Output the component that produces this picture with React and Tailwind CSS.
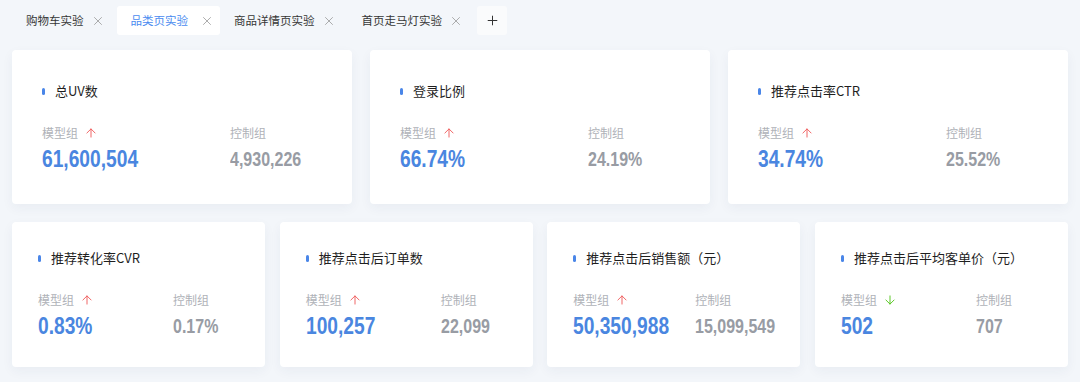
import React from 'react';
import { ArrowUp, ArrowDown, X, Plus } from 'lucide-react';

const tabs = [
  { label: '购物车实验' },
  { label: '品类页实验', active: true },
  { label: '商品详情页实验' },
  { label: '首页走马灯实验' },
];

const topCards = [
  { title: '总UV数', model: '61,600,504', control: '4,930,226', up: true },
  { title: '登录比例', model: '66.74%', control: '24.19%', up: true },
  { title: '推荐点击率CTR', model: '34.74%', control: '25.52%', up: true },
];

const bottomCards = [
  { title: '推荐转化率CVR', model: '0.83%', control: '0.17%', up: true, col: 'w-[135px]' },
  { title: '推荐点击后订单数', model: '100,257', control: '22,099', up: true, col: 'w-[135px]' },
  { title: '推荐点击后销售额（元）', model: '50,350,988', control: '15,099,549', up: true, col: 'w-[122px]' },
  { title: '推荐点击后平均客单价（元）', model: '502', control: '707', up: false, col: 'w-[135px]' },
];

const MetricCard = ({ card, pad, col }) => (
  <div className={`bg-white rounded-[4px] shadow-[0_4px_12px_rgba(30,50,90,0.05)] ${pad}`}>
    {/* title */}
    <div className="flex items-center h-[18px]">
      <span className="w-[3px] h-[7px] rounded-full bg-[#4a86e8]" />
      <span className="ml-[10px] text-[13px] leading-[18px] text-[#1f1f1f] whitespace-nowrap">{card.title}</span>
    </div>
    <div className="flex mt-[25px]">
      <div className={`${col} shrink-0`}>
        <div className="flex items-center h-[16px]">
          <span className="text-[12px] leading-[16px] text-[#afb2b8]">模型组</span>
          {card.up ? (
            <ArrowUp size={14} strokeWidth={1.6} className="ml-[6px] text-[#ef5b5b]" />
          ) : (
            <ArrowDown size={14} strokeWidth={1.6} className="ml-[6px] text-[#52c41a]" />
          )}
        </div>
        <div className="mt-[6px] h-[24px] whitespace-nowrap">
          <span className="inline-block origin-left scale-x-[0.8] font-['Liberation_Sans',Arial,sans-serif] font-bold text-[24px] leading-none text-[#4a86e0]">
            {card.model}
          </span>
        </div>
      </div>
      <div>
        <div className="text-[12px] leading-[16px] text-[#afb2b8]">控制组</div>
        <div className="mt-[6px] whitespace-nowrap">
          <span className="inline-block origin-left scale-x-[0.8] font-['Liberation_Sans',Arial,sans-serif] font-bold text-[20px] leading-none text-[#989ca4]">
            {card.control}
          </span>
        </div>
      </div>
    </div>
  </div>
);

const App = () => {
  return (
    <div className="w-[1080px] h-[382px] overflow-hidden bg-[#f3f6fa] font-['Noto_Sans_CJK_SC',sans-serif] pt-[6px] px-[12px]">
      {/* Tabs */}
      <div className="flex items-center h-[29px]">
        {tabs.map(tab => (
          <div
            key={tab.label}
            className={`flex items-center h-[29px] pl-[14px] rounded-[3px] ${tab.active ? 'bg-white pr-[6px]' : 'pr-[12px]'}`}
          >
            <span className={`text-[11.5px] leading-none whitespace-nowrap ${tab.active ? 'text-[#4a8cf0]' : 'text-[#363636]'}`}>
              {tab.label}
            </span>
            <X size={14} strokeWidth={1.4} className={`text-[#9a9a9a] ${tab.active ? 'ml-[12px]' : 'ml-[7px]'}`} />
          </div>
        ))}
        <div className="ml-[2px] w-[30px] h-[29px] flex items-center justify-center bg-[#fafbfc] rounded-[3px]">
          <Plus size={15} strokeWidth={1.6} className="text-[#333]" />
        </div>
      </div>

      {/* Row 1 */}
      <div className="grid grid-cols-3 gap-[18px] mt-[15px]">
        {topCards.map(card => (
          <div key={card.title} className="h-[154px]">
            <MetricCard card={card} pad="h-full pt-[32px] pl-[30px]" col="w-[188px]" />
          </div>
        ))}
      </div>

      {/* Row 2 */}
      <div className="grid grid-cols-4 gap-[14.67px] mt-[18px]">
        {bottomCards.map(card => (
          <div key={card.title} className="h-[145px]">
            <MetricCard card={card} pad="h-full pt-[27px] pl-[26px]" col={card.col} />
          </div>
        ))}
      </div>
    </div>
  );
};

export default App;
